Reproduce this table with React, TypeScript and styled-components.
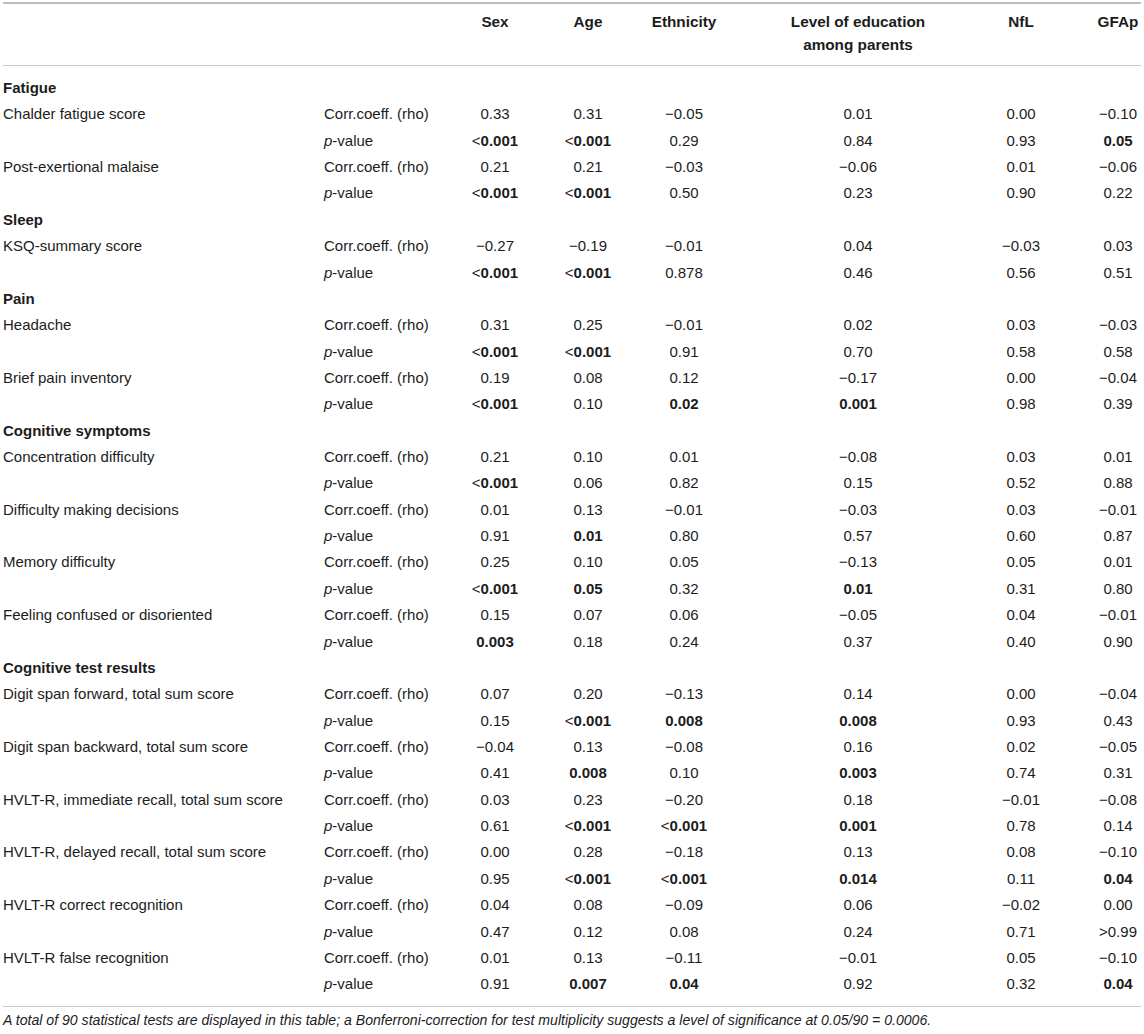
import React from "react";
import styled, { createGlobalStyle } from "styled-components";

const GlobalStyle = createGlobalStyle`
  html, body { margin: 0; padding: 0; background: #ffffff; }
  body { font-family: "Liberation Sans", Arial, Helvetica, sans-serif; color: #1c1c1c; }
`;

type Col = { width: number; pad: number };
const COLS: Col[] = [
  { width: 321, pad: 0 },
  { width: 124, pad: 0 },
  { width: 94, pad: 0 },
  { width: 92, pad: 0 },
  { width: 100, pad: 0 },
  { width: 248, pad: 0 },
  { width: 78, pad: 0 },
  { width: 81, pad: 35 },
];
const TEMPLATE = COLS.map((c) => `${c.width}px`).join(" ");

const Page = styled.div`
  padding: 2px 3px 0 3px;
  width: 1138px;
`;

const Table = styled.div`
  border-top: 2px solid #bcbcbc;
  border-bottom: 1px solid #c8c8c8;
`;

const HeaderRow = styled.div`
  display: grid;
  grid-template-columns: ${TEMPLATE};
  padding: 6px 0 9px 0;
  border-bottom: 1px solid #c8c8c8;
`;

const HeaderCell = styled.div<{ $pad: number }>`
  font-size: 15.3px;
  font-weight: 700;
  line-height: 23px;
  text-align: center;
  padding-left: ${(p) => p.$pad}px;
`;

const Body = styled.div`
  padding: 9px 0 8px 0;
`;

const Row = styled.div`
  display: grid;
  grid-template-columns: ${TEMPLATE};
  height: 26.36px;
  line-height: 26.36px;
  font-size: 15px;
  white-space: nowrap;
`;

const SectionTitle = styled.div`
  grid-column: 1 / -1;
  font-weight: 700;
`;

const LabelCell = styled.div``;

const StatCell = styled.div``;

const ValueCell = styled.div<{ $pad: number; $bold: boolean }>`
  text-align: center;
  padding-left: ${(p) => p.$pad}px;
  font-weight: ${(p) => (p.$bold ? 700 : 400)};
`;

const Sign = styled.span`
  font-weight: 400;
`;

const Italic = styled.span`
  font-style: italic;
`;

const Footnote = styled.div`
  font-size: 14.1px;
  font-style: italic;
  line-height: 16px;
  padding-top: 5px;
  white-space: nowrap;
`;

type Item = { label: string; rho: string[]; p: string[] };
type Section = { title: string; items: Item[] };

const b = (s: string) => `*${s}`;

const DATA: Section[] = [
  {
    title: "Fatigue",
    items: [
      {
        label: "Chalder fatigue score",
        rho: ["0.33", "0.31", "−0.05", "0.01", "0.00", "−0.10"],
        p: [b("<0.001"), b("<0.001"), "0.29", "0.84", "0.93", b("0.05")],
      },
      {
        label: "Post-exertional malaise",
        rho: ["0.21", "0.21", "−0.03", "−0.06", "0.01", "−0.06"],
        p: [b("<0.001"), b("<0.001"), "0.50", "0.23", "0.90", "0.22"],
      },
    ],
  },
  {
    title: "Sleep",
    items: [
      {
        label: "KSQ-summary score",
        rho: ["−0.27", "−0.19", "−0.01", "0.04", "−0.03", "0.03"],
        p: [b("<0.001"), b("<0.001"), "0.878", "0.46", "0.56", "0.51"],
      },
    ],
  },
  {
    title: "Pain",
    items: [
      {
        label: "Headache",
        rho: ["0.31", "0.25", "−0.01", "0.02", "0.03", "−0.03"],
        p: [b("<0.001"), b("<0.001"), "0.91", "0.70", "0.58", "0.58"],
      },
      {
        label: "Brief pain inventory",
        rho: ["0.19", "0.08", "0.12", "−0.17", "0.00", "−0.04"],
        p: [b("<0.001"), "0.10", b("0.02"), b("0.001"), "0.98", "0.39"],
      },
    ],
  },
  {
    title: "Cognitive symptoms",
    items: [
      {
        label: "Concentration difficulty",
        rho: ["0.21", "0.10", "0.01", "−0.08", "0.03", "0.01"],
        p: [b("<0.001"), "0.06", "0.82", "0.15", "0.52", "0.88"],
      },
      {
        label: "Difficulty making decisions",
        rho: ["0.01", "0.13", "−0.01", "−0.03", "0.03", "−0.01"],
        p: ["0.91", b("0.01"), "0.80", "0.57", "0.60", "0.87"],
      },
      {
        label: "Memory difficulty",
        rho: ["0.25", "0.10", "0.05", "−0.13", "0.05", "0.01"],
        p: [b("<0.001"), b("0.05"), "0.32", b("0.01"), "0.31", "0.80"],
      },
      {
        label: "Feeling confused or disoriented",
        rho: ["0.15", "0.07", "0.06", "−0.05", "0.04", "−0.01"],
        p: [b("0.003"), "0.18", "0.24", "0.37", "0.40", "0.90"],
      },
    ],
  },
  {
    title: "Cognitive test results",
    items: [
      {
        label: "Digit span forward, total sum score",
        rho: ["0.07", "0.20", "−0.13", "0.14", "0.00", "−0.04"],
        p: ["0.15", b("<0.001"), b("0.008"), b("0.008"), "0.93", "0.43"],
      },
      {
        label: "Digit span backward, total sum score",
        rho: ["−0.04", "0.13", "−0.08", "0.16", "0.02", "−0.05"],
        p: ["0.41", b("0.008"), "0.10", b("0.003"), "0.74", "0.31"],
      },
      {
        label: "HVLT-R, immediate recall, total sum score",
        rho: ["0.03", "0.23", "−0.20", "0.18", "−0.01", "−0.08"],
        p: ["0.61", b("<0.001"), b("<0.001"), b("0.001"), "0.78", "0.14"],
      },
      {
        label: "HVLT-R, delayed recall, total sum score",
        rho: ["0.00", "0.28", "−0.18", "0.13", "0.08", "−0.10"],
        p: ["0.95", b("<0.001"), b("<0.001"), b("0.014"), "0.11", b("0.04")],
      },
      {
        label: "HVLT-R correct recognition",
        rho: ["0.04", "0.08", "−0.09", "0.06", "−0.02", "0.00"],
        p: ["0.47", "0.12", "0.08", "0.24", "0.71", ">0.99"],
      },
      {
        label: "HVLT-R false recognition",
        rho: ["0.01", "0.13", "−0.11", "−0.01", "0.05", "−0.10"],
        p: ["0.91", b("0.007"), b("0.04"), "0.92", "0.32", b("0.04")],
      },
    ],
  },
];

const HEADERS: React.ReactNode[] = [
  "",
  "",
  "Sex",
  "Age",
  "Ethnicity",
  <>
    Level of education
    <br />
    among parents
  </>,
  "NfL",
  "GFAp",
];

function Value({ raw, pad }: { raw: string; pad: number }) {
  const bold = raw.startsWith("*");
  const text = bold ? raw.slice(1) : raw;
  const sign = text[0] === "<" || text[0] === ">" ? text[0] : "";
  const rest = sign ? text.slice(1) : text;
  return (
    <ValueCell $pad={pad} $bold={bold}>
      {sign && <Sign>{sign}</Sign>}
      {rest}
    </ValueCell>
  );
}

function DataRow({ label, stat, values }: { label: string; stat: React.ReactNode; values: string[] }) {
  return (
    <Row>
      <LabelCell>{label}</LabelCell>
      <StatCell>{stat}</StatCell>
      {values.map((v, i) => (
        <Value key={i} raw={v} pad={COLS[i + 2].pad} />
      ))}
    </Row>
  );
}

export default function App() {
  return (
    <Page>
      <GlobalStyle />
      <Table>
        <HeaderRow>
          {HEADERS.map((h, i) => (
            <HeaderCell key={i} $pad={COLS[i].pad}>
              {h}
            </HeaderCell>
          ))}
        </HeaderRow>
        <Body>
          {DATA.map((section) => (
            <React.Fragment key={section.title}>
              <Row>
                <SectionTitle>{section.title}</SectionTitle>
              </Row>
              {section.items.map((item) => (
                <React.Fragment key={item.label}>
                  <DataRow label={item.label} stat="Corr.coeff. (rho)" values={item.rho} />
                  <DataRow
                    label=""
                    stat={
                      <>
                        <Italic>p</Italic>-value
                      </>
                    }
                    values={item.p}
                  />
                </React.Fragment>
              ))}
            </React.Fragment>
          ))}
        </Body>
      </Table>
      <Footnote>
        A total of 90 statistical tests are displayed in this table; a Bonferroni-correction for test
        multiplicity suggests a level of significance at 0.05/90 = 0.0006.
      </Footnote>
    </Page>
  );
}
